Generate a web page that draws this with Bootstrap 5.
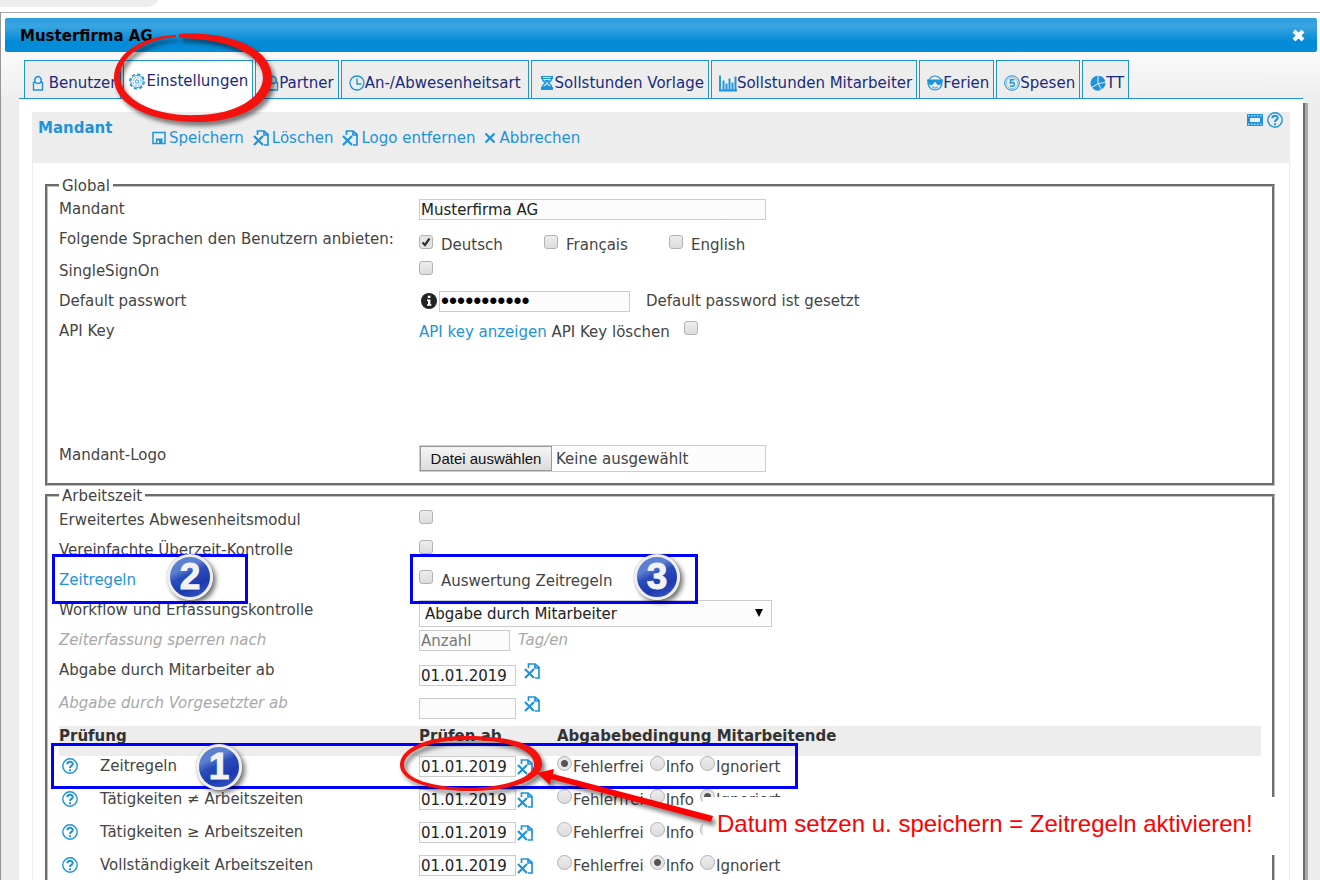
<!DOCTYPE html>
<html lang="de">
<head>
<meta charset="utf-8">
<meta name="viewport" content="width=device-width, initial-scale=1">
<title>Musterfirma AG</title>
<link href="https://cdn.jsdelivr.net/npm/bootstrap@5.3.0/dist/css/bootstrap.min.css" rel="stylesheet">
<style>
:root { --brand: #1c93dc; --line: #ccc; --soft: #ededed; }
body { font: 15px/20px "DejaVu Sans", Verdana, sans-serif; color: #444; height: 100vh; overflow: hidden; }
a, .tool { color: var(--brand); text-decoration: none; }
svg.ico { width: 16px; height: 16px; flex: none; color: var(--brand); display: block; }
svg.slim { width: 12px; }
svg.mid { width: 14px; height: 14px; }
svg.large { width: 18px; height: 17px; }
.behind { height: 12px; }
.behind div { width: 158px; height: 7px; background: var(--soft); border-bottom-right-radius: 16px 8px; }
.dialogbox { border: solid #aaa; border-width: 1px 0 0 1px; border-left-color: #8d979c; background: linear-gradient(#fff, #fafafa 40px, var(--soft) 90px); padding: 5px 3px 0 4px; min-height: 100vh; }
.titlebar { height: 34px; padding: 0 12px 0 15px; background: linear-gradient(#2e9fde, #38a4e0 25%, #048bd8 70%, #058bd8); border-radius: 2px; color: #000; }
.titlebar h1 { font-size: 15px; font-weight: 700; margin: 0; padding-top: 2px; }
.titlebar button { border: 0; background: none; padding: 0; color: #fff; }
.titlebar button svg { width: 13px; height: 13px; display: block; }
.sheet { margin: 8px 14px 0; }
.tabs { gap: 2px; padding-left: 5px; border-bottom: 1px solid var(--brand); }
.tabs a { height: 38px; border: 1px solid var(--brand); border-bottom: 0; background: var(--soft); color: #1b2a80; padding: 7px 4px 0 7px; display: flex; align-items: center; white-space: nowrap; }
.tabs a.current { background: #fff; height: 39px; margin-bottom: -1px; padding: 2px 4px 0; }
.tabs a.indent { padding-left: 11px; }
.tabs a.roomy { padding-right: 7px; }
.panelbox { background: #fff; padding: 13px 13px 0; position: relative; }
.panelbox::after { content: ""; position: absolute; left: 100%; top: 4px; bottom: 0; width: 5px; background: linear-gradient(90deg, #6c6c6c 2px, #aaa 2px); }
.panelhead { background: var(--soft); height: 51px; padding: 0 7px 0 6px; color: var(--brand); }
.panelhead h2 { font-size: 15px; font-weight: 700; line-height: 32px; margin: 0; width: 114px; }
.tool { border: 0; background: none; padding: 0; display: flex; align-items: center; }
.toolbar { gap: 9px; padding-top: 16px; }
.toolbar .tool { gap: 3px; }
.panelbody { border: solid #eee; border-width: 0 1px; padding: 14px 14px 0 12px; }
fieldset { border: 3px groove silver; padding: 0 11px; }
fieldset > legend { float: none; width: auto; margin: 0; padding: 1px 3px 0; font-size: 15px; line-height: 16px; }
.group1 { height: 309px; margin-bottom: 1px; }
.group2 > legend { margin-bottom: 1px; }
.line { display: grid; grid-template-columns: 360px 1fr; height: 30px; }
.line > :first-child { line-height: 30px; }
.line > div { display: flex; align-items: flex-start; }
.r32 { height: 32px; } .r33 { height: 33px; } .tall { height: 124px; }
.drop5 { padding-top: 5px; } .drop10 { padding-top: 10px; }
.txt { line-height: 32px; }
.off { color: #a8a8a8; font-style: italic; }
.box { border: 1px solid var(--line); background: #fcfcfc; color: #222; padding: 0 1px; height: 21px; line-height: 19px; border-radius: 0; }
.box::placeholder { color: #777; }
.wide { width: 347px; }
.days { width: 91px; }
.date { width: 97px; }
.secret { width: 191px; font-family: "Liberation Sans", Arial, sans-serif; font-size: 23px; color: #000; }
.info { margin: 2px 2px 0; }
.gap-wide { padding-left: 14px; }
input[type=checkbox], input[type=radio] { appearance: none; flex: none; width: 14px; height: 14px; margin: 0; border: 1px solid #b3b3b3; border-radius: 3px; background: linear-gradient(#ededed, #dcdcdc); }
input[type=checkbox]:checked { background: url("data:image/svg+xml,%3Csvg xmlns='http://www.w3.org/2000/svg' viewBox='0 0 12 12'%3E%3Cpath d='M2.5 6.5 5 9l4.500-6.500' fill='none' stroke='%23333' stroke-width='2.200'/%3E%3C/svg%3E") #e4e4e4; }
input[type=radio] { width: 15px; height: 15px; border-radius: 50%; }
input[type=radio]:checked { background: radial-gradient(circle, #555 3px, #e6e6e6 4px); }
.lang { width: 125px; gap: 8px; display: flex; line-height: 32px; }
.lang input { margin-top: 11px; }
.filebox { width: 347px; height: 27px; display: flex; padding: 0; line-height: 26px; color: #444; }
.filebox button { border: 1px solid #999; background: linear-gradient(#f5f5f5, #dcdcdc); font: 15px/20px "Liberation Sans", Arial, sans-serif; color: #111; width: 132px; padding: 0; margin-right: 4px; }
select.box { width: 353px; height: 27px; padding: 2px 5px 0; appearance: none; background: #fcfcfc url("data:image/svg+xml,%3Csvg xmlns='http://www.w3.org/2000/svg' viewBox='0 0 8 8'%3E%3Cpath d='M0 0h8L4 8z'/%3E%3C/svg%3E") no-repeat right 8px top 8px / 8px 8px; }
.checks { width: 100%; table-layout: fixed; margin-top: 5px; }
.checks th, .checks td { padding: 0; vertical-align: top; height: 33px; white-space: nowrap; }
.checks th { height: 30px; background: var(--soft); color: #333; }
.helplink { display: block; padding: 2px 0 0 3px; }
.checks .tool { padding-left: 1px; }
.choice { gap: 1px; display: flex; line-height: 22px; margin-right: 6px; }
.filler { height: 60px; }
.note { position: absolute; }
.mark-frame { border: 3px solid #00f; }
.num { width: 46px; height: 46px; border-radius: 50%; border: 3px solid #eee; background: linear-gradient(155deg, #5c7fd0 30%, #2a4cba 45%, #1c3ab0 70%, #3d60cc); box-shadow: 3px 3px 5px rgba(0,0,0,.55), 0 0 1px #777; color: #f2f2f2; font: 900 37px/40px "Liberation Sans", Arial, sans-serif; text-align: center; -webkit-text-stroke: 1px #f2f2f2; }
.hint { background: #fff; color: #f00; font: 24px/54px "Liberation Sans", Arial, sans-serif; white-space: nowrap; padding: 0 0 4px 14px; }
.strokes { overflow: visible; pointer-events: none; filter: drop-shadow(3px 4px 2px rgba(0,0,0,.5)); }
</style>
</head>
<body class="position-relative">
<svg class="d-none">
  <defs>
    <symbol id="person" viewBox="0 0 12 16"><path d="M3.500 7.500a3.200 3.700 0 1 1 5 0M3.500 7.500H1.500V15h9V7.500h-2M3.500 7.500c1.500 1.200 3.500 1.200 5 0" fill="none" stroke="currentColor" stroke-width="1.400"/></symbol>
    <symbol id="gear" viewBox="0 0 18 18"><circle cx="9" cy="9" r="7.600" fill="none" stroke="currentColor" stroke-width="1.600" stroke-dasharray="3.500 2.470"/><circle cx="9" cy="9" r="6.400" fill="none" stroke="currentColor" stroke-width=".9"/><circle cx="9" cy="9" r="4.200" fill="none" stroke="currentColor" stroke-width=".8" stroke-dasharray="2 1.300"/><circle cx="9" cy="9" r="1.800" fill="none" stroke="currentColor"/></symbol>
    <symbol id="clock" viewBox="0 0 16 16"><circle cx="8" cy="8" r="7" fill="none" stroke="currentColor" stroke-width="1.300"/><path d="M8 3.500V9h4.500" fill="none" stroke="currentColor" stroke-width="1.400"/></symbol>
    <symbol id="hourglass" viewBox="0 0 16 16"><path d="M2 1h12v3H2zM2 12h12v3H2z" fill="currentColor"/><path d="M3.500 4c0 3 3 3 3 4s-3 1-3 4h9c0-3-3-3-3-4s3-1 3-4" fill="none" stroke="currentColor" stroke-width="1.500"/><path d="M5 5h6L8 8zM8 9l4 4H4z" fill="currentColor"/><path d="M4 2.500h8" stroke="#fff" stroke-width=".8"/></symbol>
    <symbol id="bars" viewBox="0 0 18 16"><path d="M1 0v15h17M4.500 5v9M7.500 8v6M10.500 3v11M13.500 7v7M16.500 1v13" fill="none" stroke="currentColor" stroke-width="1.900"/></symbol>
    <symbol id="cool" viewBox="0 0 16 16"><circle cx="8" cy="8" r="7" fill="none" stroke="currentColor" stroke-width="1.200"/><path d="M0 4.500h16v2h-1c0 2-1 3.500-3 3.500S9.500 9 8.500 7h-1C6.500 9 6 10 4 10S1 8.500 1 6.500H0z" fill="currentColor"/><path d="M5 11.500c2 2 4 2 6 0" fill="none" stroke="currentColor"/></symbol>
    <symbol id="coin" viewBox="0 0 16 16"><circle cx="8" cy="8" r="7.300" fill="none" stroke="currentColor"/><circle cx="8" cy="8" r="5.700" fill="none" stroke="currentColor" stroke-width=".5"/><path d="M10.500 4.700H6.700L6.300 8c3-1.200 4.300 0 4 1.700-.3 1.800-2.800 2-4.300.9" fill="none" stroke="currentColor" stroke-width="1.500"/></symbol>
    <symbol id="pie" viewBox="0 0 16 16"><path d="M7.500.8v7.700L1.500 12A7.500 7.500 0 0 1 7.500.8zM8.500.8a7.300 7.300 0 0 1 6.800 6l-6.800 1.400zM15.500 7.800a7.300 7.300 0 0 1-3.800 6.400L8.900 9zM8 9.200l3 5.500A7.500 7.500 0 0 1 2 12.800z" fill="currentColor"/></symbol>
    <symbol id="disk" viewBox="0 0 14 14"><path d="M1 1.500h12v11H1z" fill="none" stroke="currentColor" stroke-width="1.500"/><path d="M4 7.500h6.500v5H4z" fill="currentColor"/><path d="M5.500 9.500h1.500v2.500H5.500z" fill="#fff"/></symbol>
    <symbol id="filex" viewBox="0 0 16 16"><path d="M4.500 5V1H11l4 3.500V15h-4M11 1v4h4" fill="none" stroke="currentColor" stroke-width="1.700"/><path d="M1 6 10 15M10 6 1 15" fill="none" stroke="currentColor" stroke-width="2.200"/></symbol>
    <symbol id="cross" viewBox="0 0 12 12"><path d="m1.500 1.500 9 9m0-9-9 9" fill="none" stroke="currentColor" stroke-width="2.200"/></symbol>
    <symbol id="fatcross" viewBox="0 0 13 13"><path d="m2 2 9 9m0-9-9 9" fill="none" stroke="currentColor" stroke-width="4"/></symbol>
    <symbol id="film" viewBox="0 0 16 16"><path d="M0 2h16v12H0z" fill="currentColor"/><path d="M3 6h10v4H3z" fill="#ededed"/><path d="M1 3.800h14M1 12.200h14" stroke="#fff" stroke-width="1" stroke-dasharray="1.400 1.600"/></symbol>
    <symbol id="help" viewBox="0 0 16 16"><circle cx="8" cy="8" r="7.200" fill="none" stroke="currentColor" stroke-width="1.400"/><path d="M5.300 6.300C5.300 3 10.700 3 10.700 6c0 2-2.700 1.800-2.700 4" fill="none" stroke="currentColor" stroke-width="2"/><path d="M7 11.200h2v2H7z" fill="currentColor"/></symbol>
    <symbol id="info" viewBox="0 0 16 16"><circle cx="8" cy="8" r="8" fill="#222"/><path d="M6.800 2.800h2.600v2.200H6.800zM6 6.500h3.400v4.800h1v1.500H6v-1.500h1V8H6z" fill="#fff"/></symbol>
  </defs>
</svg>

<div class="behind"><div></div></div>
<main class="dialogbox">
  <header class="titlebar d-flex align-items-center justify-content-between">
    <h1>Musterfirma AG</h1>
    <button type="button" aria-label="Schliessen"><svg><use href="#fatcross"/></svg></button>
  </header>

  <div class="sheet">
    <nav class="tabs d-flex align-items-end">
      <a href="#"><svg class="ico slim"><use href="#person"/></svg>&nbsp;Benutzer</a>
      <a href="#" class="current"><svg class="ico large"><use href="#gear"/></svg>Einstellungen</a>
      <a href="#" class="indent"><svg class="ico slim"><use href="#person"/></svg>Partner</a>
      <a href="#" class="roomy"><svg class="ico"><use href="#clock"/></svg>An-/Abwesenheitsart</a>
      <a href="#"><svg class="ico"><use href="#hourglass"/></svg>Sollstunden Vorlage</a>
      <a href="#"><svg class="ico large"><use href="#bars"/></svg>Sollstunden Mitarbeiter</a>
      <a href="#"><svg class="ico"><use href="#cool"/></svg>Ferien</a>
      <a href="#"><svg class="ico"><use href="#coin"/></svg>Spesen</a>
      <a href="#"><svg class="ico"><use href="#pie"/></svg>TT</a>
    </nav>

    <div class="panelbox">
      <div class="panelhead d-flex">
        <h2>Mandant</h2>
        <div class="toolbar d-flex align-items-start flex-grow-1">
          <button type="button" class="tool"><svg class="ico mid"><use href="#disk"/></svg>Speichern</button>
          <button type="button" class="tool"><svg class="ico"><use href="#filex"/></svg>Löschen</button>
          <button type="button" class="tool"><svg class="ico"><use href="#filex"/></svg>Logo entfernen</button>
          <button type="button" class="tool"><svg class="ico slim"><use href="#cross"/></svg>Abbrechen</button>
        </div>
        <div class="d-flex gap-1">
          <a href="#" aria-label="Film"><svg class="ico"><use href="#film"/></svg></a>
          <a href="#" aria-label="Hilfe"><svg class="ico"><use href="#help"/></svg></a>
        </div>
      </div>

      <form class="panelbody">
        <fieldset class="group1">
          <legend>Global</legend>
          <div class="line">
            <label for="mandant">Mandant</label>
            <div class="drop5"><input id="mandant" class="box wide" type="text" value="Musterfirma AG"></div>
          </div>
          <div class="line r32">
            <span>Folgende Sprachen den Benutzern anbieten:</span>
            <div>
              <label class="lang"><input type="checkbox" checked><span class="drop5">Deutsch</span></label>
              <label class="lang"><input type="checkbox"><span class="drop5">Français</span></label>
              <label class="lang"><input type="checkbox"><span class="drop5">English</span></label>
            </div>
          </div>
          <div class="line">
            <label for="sso">SingleSignOn</label>
            <div class="drop5"><input id="sso" type="checkbox"></div>
          </div>
          <div class="line">
            <label for="pw">Default passwort</label>
            <div class="drop5">
              <svg class="ico info"><use href="#info"/></svg>
              <input id="pw" class="box secret" type="password" value="geheimnis12">
              <span class="ps-3">Default password ist gesetzt</span>
            </div>
          </div>
          <div class="line tall">
            <span>API Key</span>
            <div>
              <span class="txt"><a href="#">API key anzeigen</a> <label for="apidel">API Key löschen</label></span>
              <span class="drop5 gap-wide"><input id="apidel" class="d-block" type="checkbox"></span>
            </div>
          </div>
          <div class="line">
            <label for="logo">Mandant-Logo</label>
            <div class="drop5">
              <div class="box filebox"><button type="button" onclick="document.getElementById('logo').click()">Datei auswählen</button>Keine ausgewählt</div>
              <input id="logo" type="file" class="d-none">
            </div>
          </div>
        </fieldset>

        <fieldset class="group2">
          <legend>Arbeitszeit</legend>
          <div class="line">
            <label for="abw">Erweitertes Abwesenheitsmodul</label>
            <div class="drop5"><input id="abw" type="checkbox"></div>
          </div>
          <div class="line">
            <label for="uez">Vereinfachte Überzeit-Kontrolle</label>
            <div class="drop5"><input id="uez" type="checkbox"></div>
          </div>
          <div class="line">
            <a href="#">Zeitregeln</a>
            <div><label class="d-flex gap-2"><span class="drop5"><input class="d-block" type="checkbox"></span><span class="txt">Auswertung Zeitregeln</span></label></div>
          </div>
          <div class="line">
            <label for="wf">Workflow und Erfassungskontrolle</label>
            <div class="drop5"><select id="wf" class="box"><option>Abgabe durch Mitarbeiter</option></select></div>
          </div>
          <div class="line off">
            <label for="tage">Zeiterfassung sperren nach</label>
            <div class="drop5"><input id="tage" class="box days" type="text" placeholder="Anzahl"><span class="ps-2">Tag/en</span></div>
          </div>
          <div class="line r33">
            <label for="abma">Abgabe durch Mitarbeiter ab</label>
            <div><span class="drop10"><input id="abma" class="box date d-block" type="text" value="01.01.2019"></span><button type="button" class="tool pt-2 ps-2" aria-label="Datum löschen"><svg class="ico"><use href="#filex"/></svg></button></div>
          </div>
          <div class="line r33">
            <label for="abvg" class="off">Abgabe durch Vorgesetzter ab</label>
            <div><span class="drop10"><input id="abvg" class="box date d-block" type="text"></span><button type="button" class="tool pt-2 ps-2" aria-label="Datum löschen"><svg class="ico"><use href="#filex"/></svg></button></div>
          </div>
          <table class="checks">
            <colgroup><col style="width:41px"><col style="width:319px"><col style="width:138px"><col></colgroup>
            <thead><tr><th colspan="2">Prüfung</th><th>Prüfen ab</th><th>Abgabebedingung Mitarbeitende</th></tr></thead>
            <tbody id="rules"></tbody>
          </table>
          <div class="filler"></div>
        </fieldset>
      </form>
    </div>
  </div>
</main>

<div class="note mark-frame" style="left:52px;top:554px;width:196px;height:50px"></div>
<div class="note mark-frame" style="left:410px;top:554px;width:288px;height:50px"></div>
<div class="note mark-frame" style="left:51px;top:743px;width:747px;height:46px"></div>
<div class="note num" style="left:167px;top:554px">2</div>
<div class="note num" style="left:634px;top:554px">3</div>
<div class="note num" style="left:196px;top:744px">1</div>
<div class="note hint" style="left:703px;top:797px;width:578px">Datum setzen u. speichern = Zeitregeln aktivieren!</div>
<svg class="note strokes" style="left:0;top:0" width="800" height="830" viewBox="0 0 800 830">
  <g fill="#f3120d" fill-rule="evenodd">
    <path d="M179 34C225 31 272 46 272 78C272 104 240 122 198 122C150 122 114 105 114 78C114 55 140 36 176 35L176 37C145 39 119 57 120 78C122 100 155 117 198 115C238 114 262 97 263 78C263 54 228 39 179 38Z"/>
    <path d="M400 765C400 748 428 736 465 736C510 736 542 744 542 764C542 781 510 791 469 791C430 791 400 781 400 765ZM404 765C404 779 432 787 469 788C505 787 534 778 534 764C534 750 508 740 468 740C430 740 404 751 404 765Z"/>
  </g>
  <path d="M537 773 554 769 553 774 713 816 711 822 551 779 550 785Z" fill="#f00"/>
</svg>

<script>
const rules = [["Zeitregeln", 0], ["Tätigkeiten ≠ Arbeitszeiten", 2], ["Tätigkeiten ≥ Arbeitszeiten", 2], ["Vollständigkeit Arbeitszeiten", 1]];
document.getElementById("rules").innerHTML = rules.map(([name, pick], i) => `<tr>
  <td><a href="#" aria-label="Hilfe" class="helplink"><svg class="ico"><use href="#help"/></svg></a></td>
  <td><label for="d${i}">${name}</label></td>
  <td><div class="d-flex"><input id="d${i}" class="box date" type="text" value="01.01.2019"><button type="button" class="tool" aria-label="Datum löschen"><svg class="ico"><use href="#filex"/></svg></button></div></td>
  <td><div class="d-flex">${["Fehlerfrei", "Info", "Ignoriert"].map((t, k) => `<label class="choice"><input type="radio" name="r${i}"${k === pick ? " checked" : ""}>${t}</label>`).join("")}</div></td>
</tr>`).join("");
</script>
<script src="https://cdn.jsdelivr.net/npm/bootstrap@5.3.0/dist/js/bootstrap.bundle.min.js"></script>
</body>
</html>
